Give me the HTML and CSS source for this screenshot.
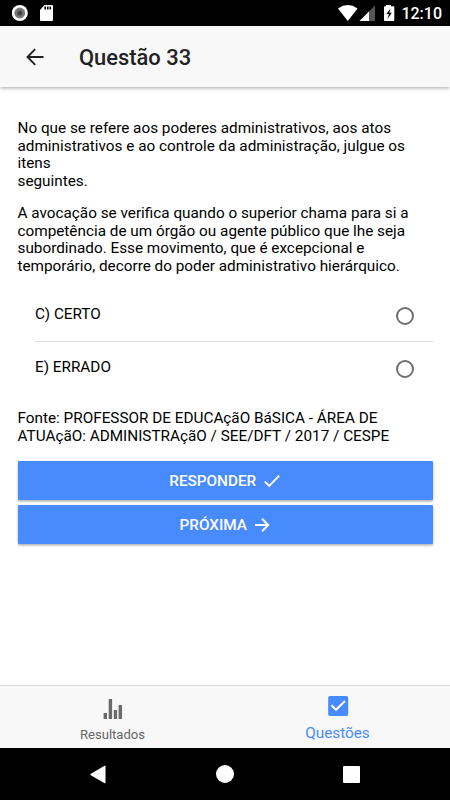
FILE: index.html
```
<!DOCTYPE html>
<html lang="pt-BR">
<head>
    <meta charset="UTF-8">
    <meta name="viewport" content="width=device-width, initial-scale=1">
    <title>Questão 33</title>
    <link rel="stylesheet" href="styles.css">
</head>
<body>
    <div class="status-bar">
        <svg class="status-left" width="42" height="18" viewBox="0 0 42 18">
            <circle cx="7.8" cy="9" r="8" fill="#fff"/>
            <circle cx="7.8" cy="9" r="5.4" fill="#777"/>
            <circle cx="7.8" cy="9" r="2.6" fill="#444"/>
            <path d="M32.5 1H40q1 0 1 1v14q0 1-1 1H29q-1 0-1-1V6z" fill="#fff"/>
            <path d="M33.2 2.500v3M35.8 2.500v3M38.3 2.500v3" stroke="#000" stroke-width="1.6"/>
        </svg>
        <svg class="status-right" width="58" height="18" viewBox="0 0 58 18">
            <path d="M0 4.4Q9.8-2.4 19.6 4.4L9.8 17z" fill="#fff"/>
            <path d="M37 1.5V17H21.5z" fill="#555"/>
            <path d="M31 7.5V17h-9.5z" fill="#fff"/>
            <path d="M48 2.2V1h5v1.2h2.3q1 0 1 1V16q0 1-1 1H47q-1 0-1-1V3.2q0-1 1-1z" fill="#fff"/>
            <path d="M52.6 4.5L48.3 10h2.6l-1.4 5 4.3-6.3h-2.5z" fill="#000"/>
        </svg>
        <span class="clock">12:10</span>
    </div>

    <header class="header">
        <svg class="back" width="18" height="18" viewBox="0 0 18 18">
            <path d="M17.5 9H1.8M9.2 1.200L1.500 9l7.700 7.800" fill="none" stroke="#222" stroke-width="1.9"/>
        </svg>
        <h1>Questão 33</h1>
    </header>

    <main class="content">
        <p>No que se refere aos poderes administrativos, aos atos<br>administrativos e ao controle da administração, julgue os<br>itens<br>seguintes.</p>
        <p>A avocação se verifica quando o superior chama para si a<br>competência de um órgão ou agente público que lhe seja<br>subordinado. Esse movimento, que é excepcional e<br>temporário, decorre do poder administrativo hierárquico.</p>

        <div class="options">
            <label class="option">C) CERTO <span class="radio"></span></label>
            <label class="option">E) ERRADO <span class="radio"></span></label>
        </div>

        <p class="source">Fonte: PROFESSOR DE EDUCAçãO BáSICA - ÁREA DE<br>ATUAçãO: ADMINISTRAçãO / SEE/DFT / 2017 / CESPE</p>

        <button class="btn">RESPONDER
            <svg width="16" height="14" viewBox="0 0 16 14">
                <path d="M.8 7.5l4.400 4.400L15.200 1.700" fill="none" stroke="#fff" stroke-width="1.9"/>
            </svg>
        </button>
        <button class="btn">PRÓXIMA
            <svg width="15" height="14" viewBox="0 0 15 14">
                <path d="M0 7h13M7 .8L13.300 7 7 13.200" fill="none" stroke="#fff" stroke-width="1.9"/>
            </svg>
        </button>
    </main>

    <nav class="tabs">
        <a class="tab">
            <svg width="24" height="24" viewBox="0 0 24 24">
                <path d="M2.600 17H6v6H2.600zM7.700 3h3.400v20H7.700zM12.800 14h3.300v9h-3.300zM17.600 9H21v14h-3.400z" fill="#6b6b6b"/>
            </svg>
            <span>Resultados</span>
        </a>
        <a class="tab active">
            <svg width="24" height="24" viewBox="0 0 24 24">
                <rect x="2.200" y="2" width="20" height="20" rx="1.8" fill="#488aff"/>
                <path d="M5.500 11.300l4.500 4.500 9-8.800" fill="none" stroke="#fff" stroke-width="2"/>
            </svg>
            <span>Questões</span>
        </a>
    </nav>

    <div class="nav-bar">
        <svg width="16" height="19" viewBox="0 0 16 19">
            <path d="M15.5 1.2v16.6q0 .8-.8.4L.8 10.2q-.8-.7 0-1.400L14.700.8q.8-.4.8.4z" fill="#fff"/>
        </svg>
        <span class="home"></span>
        <span class="recent"></span>
    </div>
</body>
</html>
```
FILE: styles.css
```
* {
    box-sizing: border-box;
}

body {
    margin: 0;
    height: 100vh;
    display: flex;
    flex-direction: column;
    overflow: hidden;
    background: #fff;
    color: #000;
    font-family: Roboto, "Liberation Sans", sans-serif;
    font-size: 15.31px;
    line-height: 17.5px;
}

.status-bar {
    flex: none;
    height: 26px;
    padding: 4px 8px 4px 12px;
    display: flex;
    align-items: center;
    background: #000;
    color: #fff;
}

.status-right {
    margin-left: auto;
}

.clock {
    margin-left: 5px;
    font-size: 16px;
    font-weight: 500;
    padding-top: 2px;
}

.header {
    flex: none;
    height: 61px;
    padding: 0 26px;
    display: flex;
    align-items: center;
    background: #f8f8f8;
    box-shadow: 0 1px 4px rgba(0,0,0,0.35);
}

.header h1 {
    margin: 2px 0 0 35px;
    font-size: 21.9px;
    line-height: 26px;
    font-weight: 500;
    color: #222;
}

.content {
    flex: 1;
    padding: 33px 17px 0 17.5px;
}

.content p {
    margin: 0 0 15.3px;
}

.options {
    margin: -2.5px 0 17px;
    padding-left: 17.5px;
}

.option {
    height: 52.5px;
    padding: 0 19px 0 0;
    display: flex;
    align-items: center;
    justify-content: space-between;
}

.option + .option {
    border-top: 1px solid #dedede;
}

.radio {
    width: 18px;
    height: 18px;
    margin-top: 3px;
    border: 2px solid #6f6f6f;
    border-radius: 50%;
}

.content .source {
    margin-bottom: 16px;
}

.btn {
    width: 100%;
    height: 39.4px;
    margin: 0 0 4.4px;
    padding: 0 1px 0 0;
    border: none;
    border-radius: 1px;
    display: flex;
    align-items: center;
    justify-content: center;
    gap: 8px;
    background: #488aff;
    color: #fff;
    font-family: inherit;
    font-size: 15.31px;
    font-weight: 500;
    box-shadow: 0 2px 2px rgba(0,0,0,0.14), 0 1px 3px rgba(0,0,0,0.2);
}

.tabs {
    flex: none;
    height: 63px;
    display: flex;
    background: #f8f8f8;
    border-top: 1px solid #dedede;
}

.tab {
    flex: 1;
    display: flex;
    flex-direction: column;
    align-items: center;
    padding-top: 10px;
    gap: 6px;
    color: #666;
    font-size: 13.1px;
}

.tab.active {
    padding-top: 8px;
    gap: 7px;
    color: #488aff;
    font-size: 15.31px;
}

.nav-bar {
    flex: none;
    height: 52px;
    padding: 0 90px;
    display: flex;
    align-items: center;
    justify-content: space-between;
    background: #000;
}

.home {
    width: 18px;
    height: 18px;
    border-radius: 50%;
    background: #fff;
}

.recent {
    width: 17px;
    height: 17px;
    border-radius: 1px;
    background: #fff;
}
```
